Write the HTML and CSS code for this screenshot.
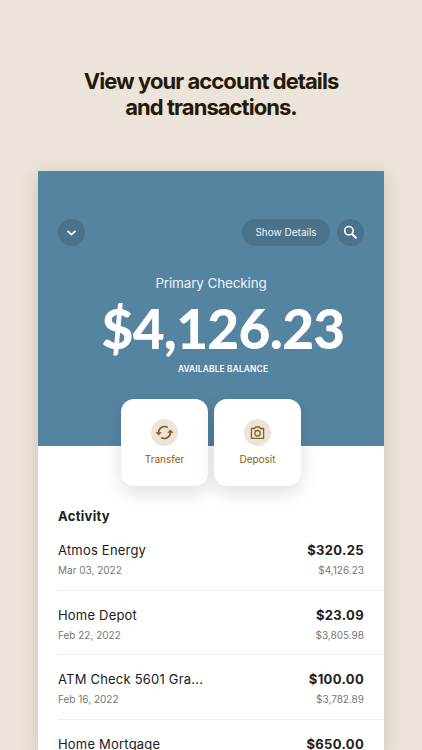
FILE: index.html
```html
<!DOCTYPE html>
<html lang="en">
<head>
<meta charset="utf-8">
<title>Account details</title>
<link rel="stylesheet" href="styles.css">
</head>
<body>
<h1 class="headline">View your account details<br>and transactions.</h1>
<main class="phone">
  <header class="hero">
    <div class="toolbar">
      <button class="round" aria-label="Back"><svg width="27" height="27" viewBox="0 0 27 27"><path d="M9.5 11.8l4 3.8 4-3.8" fill="none" stroke="#fff" stroke-width="1.7"/></svg></button>
      <button class="details">Show Details</button>
      <button class="round" aria-label="Search"><svg width="27" height="27" viewBox="0 0 27 27" fill="none" stroke="#fff"><circle cx="11.9" cy="11.7" r="4.2" stroke-width="1.6"/><path d="M14.9 14.7l4.5 4.5" stroke-width="2"/></svg></button>
    </div>
    <div class="account">Primary Checking</div>
    <div class="balance">$4,126.23</div>
    <div class="caption">AVAILABLE BALANCE</div>
  </header>
  <nav class="actions">
    <button class="action">
      <svg width="27" height="27" viewBox="0 0 27 27"><circle cx="13.5" cy="13.5" r="13.5" fill="#ece4da"/><g fill="none" stroke="#87601c" stroke-width="1.7"><path d="M7.6 14v-.5A6 6 0 0 1 16.8 8.5M19.4 13v.5A6 6 0 0 1 10.2 18.5"/></g><path d="M4.4 13.2h6.4l-3.2 3.4zM22.6 13.8h-6.4l3.2-3.4z" fill="#87601c"/></svg>
      <span>Transfer</span>
    </button>
    <button class="action">
      <svg width="27" height="27" viewBox="0 0 27 27"><circle cx="13.5" cy="13.5" r="13.5" fill="#ece4da"/><g fill="none" stroke="#87601c" stroke-width="1.3"><path d="M7.4 9.5h3l1.3-1.5h3.6l1.3 1.5h3v9.8H7.4z" stroke-linejoin="round"/><circle cx="13.5" cy="14.2" r="2.7"/></g></svg>
      <span>Deposit</span>
    </button>
  </nav>
  <section class="activity">
    <h2>Activity</h2>
    <ul>
      <li><div><b class="name">Atmos Energy</b><span class="date">Mar 03, 2022</span></div><div class="right"><b class="amount">$320.25</b><span class="remaining">$4,126.23</span></div></li>
      <li><div><b class="name">Home Depot</b><span class="date">Feb 22, 2022</span></div><div class="right"><b class="amount">$23.09</b><span class="remaining">$3,805.98</span></div></li>
      <li><div><b class="name">ATM Check 5601 Gra...</b><span class="date">Feb 16, 2022</span></div><div class="right"><b class="amount">$100.00</b><span class="remaining">$3,782.89</span></div></li>
      <li><div><b class="name">Home Mortgage</b></div><div class="right"><b class="amount">$650.00</b></div></li>
    </ul>
  </section>
</main>
</body>
</html>
```
FILE: styles.css
```css
* { box-sizing: border-box; }
body {
  margin: 0;
  height: 750px;
  overflow: hidden;
  background: #ece4da;
  font-family: Inter, "Liberation Sans", sans-serif;
  color: #202020;
}
button { border: 0; padding: 0; font: inherit; }
svg { display: block; }
.headline {
  margin: 0;
  padding-top: 68px;
  height: 171px;
  font-size: 22px;
  line-height: 26px;
  font-weight: 700;
  letter-spacing: -0.95px;
  text-align: center;
  color: #251a08;
}
.phone {
  width: 346px;
  height: 579px;
  margin: 0 auto;
  background: #fff;
  box-shadow: 0 4px 18px rgba(80, 55, 30, 0.2);
}
.hero {
  height: 275px;
  padding: 48px 20px 0;
  background: #5584a1;
  color: #fff;
  text-align: center;
}
.toolbar { display: flex; align-items: center; gap: 7px; }
.round { width: 27px; height: 27px; border-radius: 50%; background: #4b728b; }
.details {
  width: 88px;
  height: 27px;
  margin-left: auto;
  padding-bottom: 1px;
  border-radius: 14px;
  background: #4b728b;
  color: #edf2f5;
  font-size: 10px;
  letter-spacing: 0;
}
.account {
  margin-top: 28px;
  height: 18px;
  font-size: 13.5px;
  line-height: 18px;
  letter-spacing: -0.15px;
  color: #edf2f5;
}
.balance {
  height: 71px;
  padding-left: 24px;
  font-family: Lato, sans-serif;
  font-size: 55px;
  line-height: 72px;
  font-weight: 900;
  letter-spacing: -0.7px;
}
.caption {
  padding-left: 24px;
  font-size: 8.3px;
  line-height: 12px;
  font-weight: 600;
  letter-spacing: 0.2px;
}
.actions {
  display: flex;
  justify-content: center;
  gap: 6px;
  margin-top: -47px;
}
.action {
  display: flex;
  flex-direction: column;
  align-items: center;
  width: 87px;
  height: 87px;
  padding-top: 20px;
  border-radius: 13px;
  background: #fff;
  box-shadow: 0 7px 18px rgba(0, 0, 0, 0.13);
  color: #87601c;
  font-size: 10px;
  line-height: 14px;
  letter-spacing: 0;
}
.action span { margin-top: 6px; }
.activity { height: 264px; padding: 21px 0 0 20px; overflow: hidden; }
h2 {
  margin: 0;
  font-size: 13px;
  line-height: 18px;
  font-weight: 700;
  letter-spacing: 0.3px;
}
ul { margin: 0; padding: 0; list-style: none; }
li {
  display: flex;
  justify-content: space-between;
  height: 64.7px;
  padding: 14px 20px 0 0;
  border-bottom: 1px solid #eee;
}
li:first-child { height: 65.6px; padding-top: 15px; }
b, li span { display: block; }
b { font-size: 13px; line-height: 20px; }
.name { font-weight: 400; letter-spacing: 0.2px; }
.amount { font-weight: 700; letter-spacing: 0.35px; }
li span { margin-top: 3px; font-size: 10px; line-height: 14px; color: #777; letter-spacing: 0; }
.right { text-align: right; }
```
